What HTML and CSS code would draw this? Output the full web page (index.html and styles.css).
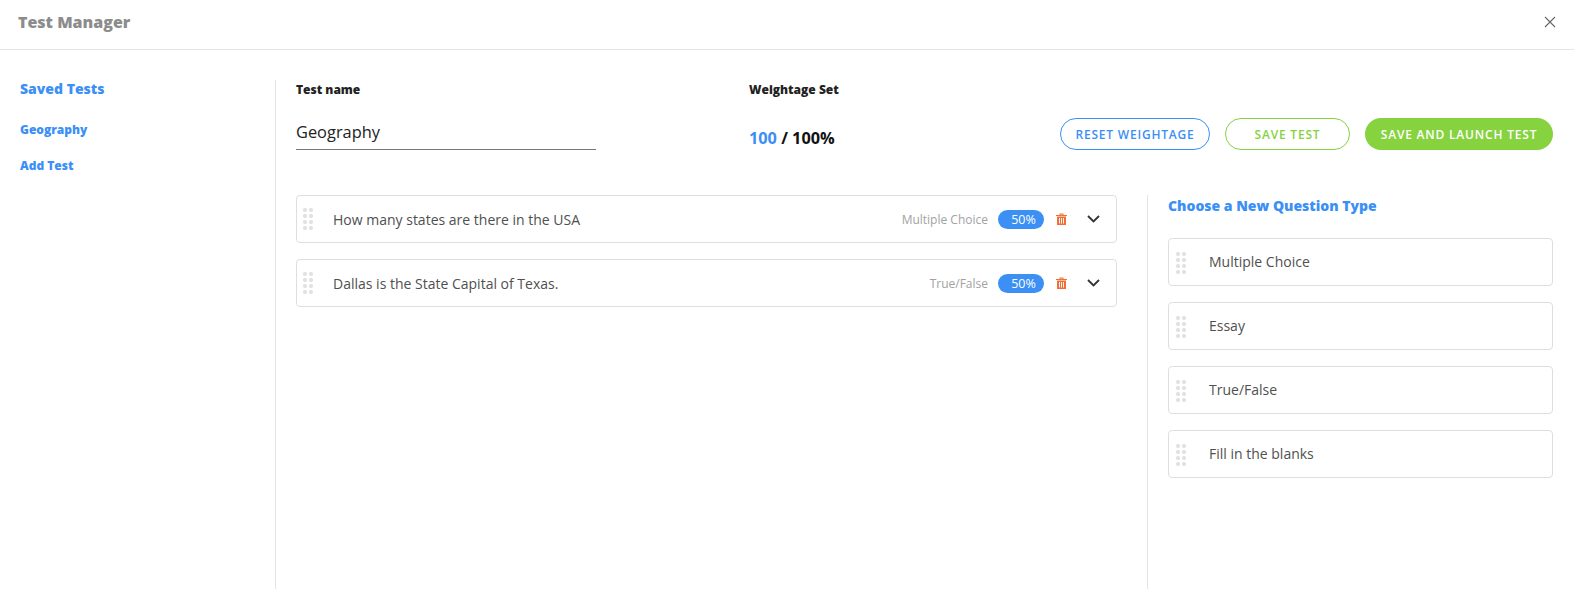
FILE: index.html
```html
<!DOCTYPE html>
<html lang="en">
<head>
    <meta charset="UTF-8">
    <meta name="viewport" content="width=device-width, initial-scale=1.0">
    <title>Test Manager</title>
    <link rel="stylesheet" href="styles.css">
</head>
<body>
    <header class="top-bar">
        <h1 class="top-title">Test Manager</h1>
        <svg class="close-icon" width="12" height="12" viewBox="0 0 12 12"><path d="M1 1l10 10M11 1L1 11" stroke="#666" stroke-width="1.1" fill="none"/></svg>
    </header>

    <div class="page">
        <aside class="sidebar">
            <h2 class="blue-title">Saved Tests</h2>
            <a class="side-link">Geography</a>
            <a class="side-link">Add Test</a>
        </aside>

        <main class="content">
            <div class="test-head">
                <div class="name-col">
                    <div class="field-label">Test name</div>
                    <div class="name-input">Geography</div>
                </div>
                <div class="weight-col">
                    <div class="field-label">Weightage Set</div>
                    <div class="weight-value"><span class="weight-now">100</span> / 100%</div>
                </div>
                <div class="button-row">
                    <button class="button button-blue">RESET WEIGHTAGE</button>
                    <button class="button button-green save-btn">SAVE TEST</button>
                    <button class="button button-solid">SAVE AND LAUNCH TEST</button>
                </div>
            </div>

            <div class="test-body">
                <div class="question-list">
                    <div class="card">
                        <span class="drag"></span>
                        <span class="card-text">How many states are there in the USA</span>
                        <span class="card-type">Multiple Choice</span>
                        <span class="pill">50%</span>
                        <svg class="trash" width="11" height="12" viewBox="0 0 11 12"><path d="M0 2h11v1H0zM3.5 2V.6h4V2h-1V1.4h-2V2zM1 3.6h9V12H1zM3 5v5.6h.9V5zm2.05 0v5.6h.9V5zM7.1 5v5.6H8V5z" fill="#ee7036" fill-rule="evenodd"/></svg>
                        <svg class="chevron" width="13" height="8" viewBox="0 0 13 8"><path d="M1 1l5.5 5.5L12 1" stroke="#333" stroke-width="1.8" fill="none"/></svg>
                    </div>
                    <div class="card">
                        <span class="drag"></span>
                        <span class="card-text">Dallas is the State Capital of Texas.</span>
                        <span class="card-type">True/False</span>
                        <span class="pill">50%</span>
                        <svg class="trash" width="11" height="12" viewBox="0 0 11 12"><path d="M0 2h11v1H0zM3.5 2V.6h4V2h-1V1.4h-2V2zM1 3.6h9V12H1zM3 5v5.6h.9V5zm2.05 0v5.6h.9V5zM7.1 5v5.6H8V5z" fill="#ee7036" fill-rule="evenodd"/></svg>
                        <svg class="chevron" width="13" height="8" viewBox="0 0 13 8"><path d="M1 1l5.5 5.5L12 1" stroke="#333" stroke-width="1.8" fill="none"/></svg>
                    </div>
                </div>

                <div class="type-list">
                    <h2 class="blue-title type-title">Choose a New Question Type</h2>
                    <div class="card"><span class="drag"></span><span class="card-text">Multiple Choice</span></div>
                    <div class="card"><span class="drag"></span><span class="card-text">Essay</span></div>
                    <div class="card"><span class="drag"></span><span class="card-text">True/False</span></div>
                    <div class="card"><span class="drag"></span><span class="card-text">Fill in the blanks</span></div>
                </div>
            </div>
        </main>
    </div>
</body>
</html>
```

FILE: styles.css
```css
* {
    box-sizing: border-box;
}
html, body {
    height: 100%;
}
body {
    margin: 0;
    font-family: "Open Sans", Arial, sans-serif;
    background-color: white;
    color: #444;
    overflow: hidden;
    display: flex;
    flex-direction: column;
}
.top-bar {
    height: 50px;
    flex-shrink: 0;
    display: flex;
    align-items: center;
    justify-content: space-between;
    padding: 0 18px 6px 18px;
    border-bottom: 1px solid #e4e4e4;
}
.top-title {
    margin: 0;
    font-size: 16px;
    font-weight: 800;
    color: #8c8c8c;
}
.page {
    flex: 1;
    display: flex;
    padding-top: 30px;
    min-height: 0;
}
.sidebar {
    width: 276px;
    flex-shrink: 0;
    padding-left: 20px;
    border-right: 1px solid #e4e4e4;
}
.blue-title {
    margin: 0;
    font-size: 14px;
    line-height: 18px;
    font-weight: 800;
    color: #3b8ff5;
}
.sidebar .blue-title {
    margin-bottom: 24px;
}
.side-link {
    display: block;
    font-size: 12px;
    line-height: 16px;
    font-weight: 800;
    color: #3b8ff5;
    margin-bottom: 20px;
}
.content {
    flex: 1;
    display: flex;
    flex-direction: column;
    padding: 0 21px 0 20px;
    min-width: 0;
}
.test-head {
    display: flex;
    height: 115px;
    flex-shrink: 0;
}
.name-col {
    width: 300px;
}
.field-label {
    padding-top: 1px;
    font-size: 12px;
    line-height: 18px;
    font-weight: 800;
    color: #222;
}
.name-input {
    margin-top: 19px;
    height: 32px;
    padding-top: 2px;
    font-size: 16.4px;
    line-height: 24px;
    color: #222;
    border-bottom: 1px solid #777;
}
.weight-col {
    margin-left: 153px;
    width: 311px;
}
.weight-value {
    margin-top: 27px;
    font-size: 16.3px;
    line-height: 24px;
    font-weight: 700;
    color: #111;
}
.weight-now {
    color: #3b8ff5;
}
.button-row {
    display: flex;
    gap: 15px;
    padding-top: 38px;
}
.button {
    height: 32px;
    padding: 0;
    border-radius: 16px;
    font-family: inherit;
    font-size: 12px;
    font-weight: 600;
    letter-spacing: 0.8px;
    background-color: white;
    cursor: pointer;
}
.button-blue {
    width: 150px;
    border: 1px solid #3b8ff5;
    color: #3b8ff5;
}
.button-green {
    border: 1px solid #86d23f;
    color: #86d23f;
}
.save-btn {
    width: 125px;
}
.button-solid {
    width: 188px;
    border: none;
    background-color: #86d23f;
    color: white;
}
.test-body {
    flex: 1;
    display: flex;
    min-height: 0;
}
.question-list {
    width: 821px;
    flex-shrink: 0;
    display: flex;
    flex-direction: column;
    gap: 16px;
}
.question-list .drag {
    margin-left: -1px;
    margin-right: 20px;
}
.type-list {
    flex: 1;
    margin-left: 30px;
    padding-left: 20px;
    border-left: 1px solid #e4e4e4;
    display: flex;
    flex-direction: column;
    gap: 16px;
}
.type-list .drag {
    margin-top: 2px;
}
.type-list .card-text {
    margin-bottom: 2px;
}
.type-title {
    height: 27px;
    padding-top: 2px;
}
.card {
    height: 48px;
    flex-shrink: 0;
    display: flex;
    align-items: center;
    padding-left: 7px;
    border: 1px solid #dedede;
    border-radius: 4px;
    background-color: white;
}
.drag {
    width: 10px;
    height: 22px;
    margin-right: 23px;
    flex-shrink: 0;
    background-image: radial-gradient(circle at 2px 2px, #e2e2e2 2px, transparent 2.2px);
    background-size: 6px 6px;
}
.card-text {
    flex: 1;
    font-size: 14px;
    color: #505050;
}
.card-type {
    font-size: 12px;
    color: #a2a2a2;
    margin-right: 10px;
}
.pill {
    width: 46px;
    height: 19px;
    padding-left: 5px;
    border-radius: 10px;
    background-color: #3b8ff5;
    color: white;
    font-size: 12.5px;
    line-height: 19px;
    text-align: center;
}
.trash {
    margin-left: 12px;
}
.chevron {
    margin-left: 20px;
    margin-right: 16px;
}
```
